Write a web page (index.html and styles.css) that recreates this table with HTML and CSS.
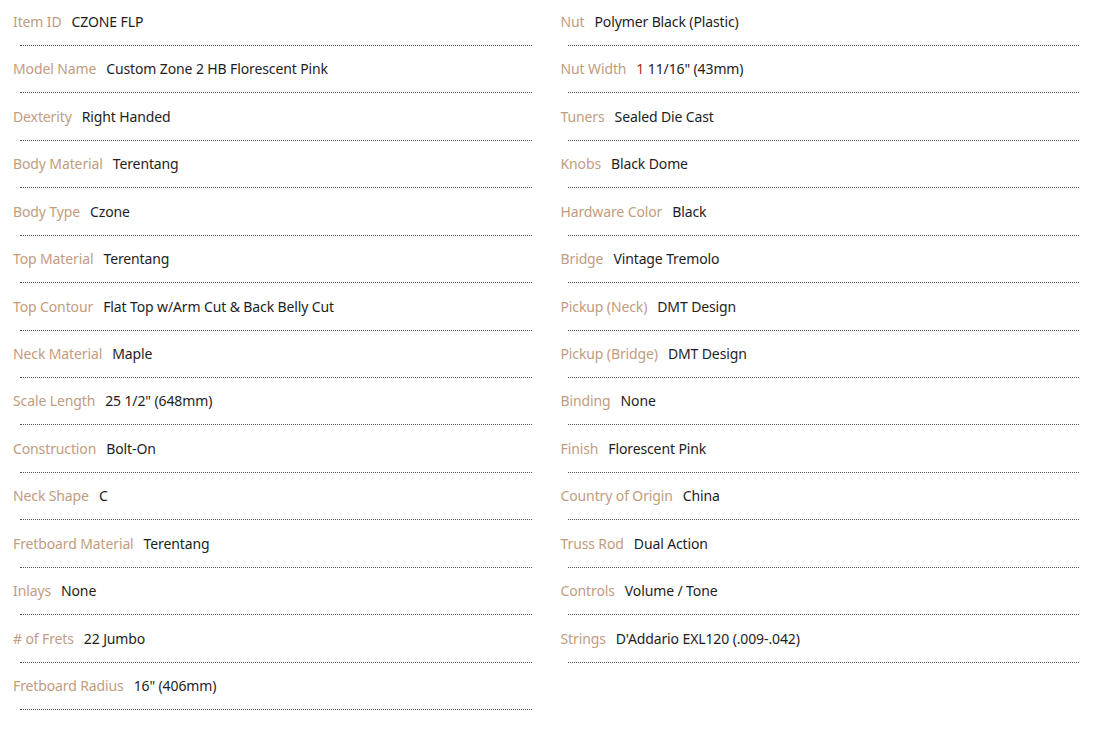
FILE: index.html
```html
<!DOCTYPE html>
<html lang="en">
<head>
<meta charset="utf-8">
<title>Specifications</title>
<link rel="stylesheet" href="styles.css">
</head>
<body>
<div class="specs">
  <div class="col">
    <div class="spec"><div class="line"><span class="label">Item ID</span><span class="value">CZONE FLP</span></div><div class="rule"></div></div>
    <div class="spec"><div class="line"><span class="label">Model Name</span><span class="value">Custom Zone 2 HB Florescent Pink</span></div><div class="rule"></div></div>
    <div class="spec"><div class="line"><span class="label">Dexterity</span><span class="value">Right Handed</span></div><div class="rule"></div></div>
    <div class="spec"><div class="line"><span class="label">Body Material</span><span class="value">Terentang</span></div><div class="rule"></div></div>
    <div class="spec"><div class="line"><span class="label">Body Type</span><span class="value">Czone</span></div><div class="rule"></div></div>
    <div class="spec"><div class="line"><span class="label">Top Material</span><span class="value">Terentang</span></div><div class="rule"></div></div>
    <div class="spec"><div class="line"><span class="label">Top Contour</span><span class="value">Flat Top w/Arm Cut &amp; Back Belly Cut</span></div><div class="rule"></div></div>
    <div class="spec"><div class="line"><span class="label">Neck Material</span><span class="value">Maple</span></div><div class="rule"></div></div>
    <div class="spec"><div class="line"><span class="label">Scale Length</span><span class="value">25 1/2" (648mm)</span></div><div class="rule"></div></div>
    <div class="spec"><div class="line"><span class="label">Construction</span><span class="value">Bolt-On</span></div><div class="rule"></div></div>
    <div class="spec"><div class="line"><span class="label">Neck Shape</span><span class="value">C</span></div><div class="rule"></div></div>
    <div class="spec"><div class="line"><span class="label">Fretboard Material</span><span class="value">Terentang</span></div><div class="rule"></div></div>
    <div class="spec"><div class="line"><span class="label">Inlays</span><span class="value">None</span></div><div class="rule"></div></div>
    <div class="spec"><div class="line"><span class="label"># of Frets</span><span class="value">22 Jumbo</span></div><div class="rule"></div></div>
    <div class="spec"><div class="line"><span class="label">Fretboard Radius</span><span class="value">16" (406mm)</span></div><div class="rule"></div></div>
  </div>
  <div class="col">
    <div class="spec"><div class="line"><span class="label">Nut</span><span class="value">Polymer Black (Plastic)</span></div><div class="rule"></div></div>
    <div class="spec"><div class="line"><span class="label">Nut Width</span><span class="value"><span class="accent">1</span> 11/16" (43mm)</span></div><div class="rule"></div></div>
    <div class="spec"><div class="line"><span class="label">Tuners</span><span class="value">Sealed Die Cast</span></div><div class="rule"></div></div>
    <div class="spec"><div class="line"><span class="label">Knobs</span><span class="value">Black Dome</span></div><div class="rule"></div></div>
    <div class="spec"><div class="line"><span class="label">Hardware Color</span><span class="value">Black</span></div><div class="rule"></div></div>
    <div class="spec"><div class="line"><span class="label">Bridge</span><span class="value">Vintage Tremolo</span></div><div class="rule"></div></div>
    <div class="spec"><div class="line"><span class="label">Pickup (Neck)</span><span class="value">DMT Design</span></div><div class="rule"></div></div>
    <div class="spec"><div class="line"><span class="label">Pickup (Bridge)</span><span class="value">DMT Design</span></div><div class="rule"></div></div>
    <div class="spec"><div class="line"><span class="label">Binding</span><span class="value">None</span></div><div class="rule"></div></div>
    <div class="spec"><div class="line"><span class="label">Finish</span><span class="value">Florescent Pink</span></div><div class="rule"></div></div>
    <div class="spec"><div class="line"><span class="label">Country of Origin</span><span class="value">China</span></div><div class="rule"></div></div>
    <div class="spec"><div class="line"><span class="label">Truss Rod</span><span class="value">Dual Action</span></div><div class="rule"></div></div>
    <div class="spec"><div class="line"><span class="label">Controls</span><span class="value">Volume / Tone</span></div><div class="rule"></div></div>
    <div class="spec"><div class="line"><span class="label">Strings</span><span class="value">D'Addario EXL120 (.009-.042)</span></div><div class="rule"></div></div>
  </div>
</div>
</body>
</html>
```

FILE: styles.css
```css
html, body {
  margin: 0;
  padding: 0;
  background: #ffffff;
}

body {
  font-family: "Noto Sans", "Open Sans", sans-serif;
  font-size: 14px;
  letter-spacing: -0.12px;
  color: #222222;
}

.specs {
  display: grid;
  grid-template-columns: 1fr 1fr;
  column-gap: 29px;
  padding: 0 27px 0 13px;
  margin-top: -1.4px;
}

.spec {
  padding-top: 13.43px;
}

.line {
  line-height: 20px;
  white-space: nowrap;
}

.label {
  color: #c29c80;
  margin-right: 10px;
}

.value {
  color: #1e1e1e;
}

.accent {
  color: #b3261e;
}

.rule {
  margin-top: 13px;
  margin-left: 7px;
  border-top: 1px dotted #555555;
}
```
